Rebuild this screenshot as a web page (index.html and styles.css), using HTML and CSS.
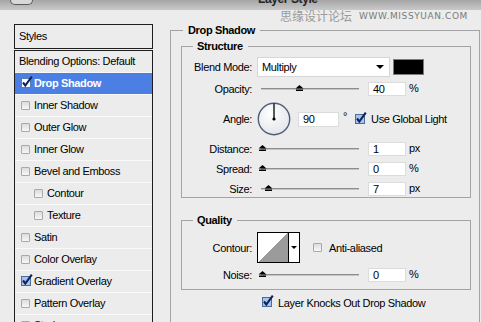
FILE: index.html
```html
<!DOCTYPE html>
<html>
<head>
	<title>Layer Style</title>
	<link rel="stylesheet" href="styles.css">
</head>
<body>
	<div class="titlebar">
		<span class="corner"></span>
		<span class="title">Layer Style</span>
	</div>
	<div class="watermark">
		<span class="cn">思缘设计论坛</span>
		<span class="url">www.MISSYUAN.COM</span>
	</div>

	<div class="main">
		<div class="styles">
			<div class="styles-head">Styles</div>
			<ul class="style-list">
				<li class="plain">Blending Options: Default</li>
				<li class="selected"><svg class="check" width="12" height="12" viewBox="0 0 12 12"><rect x="0.5" y="2.5" width="9" height="9" fill="#fff" stroke="#5a7bb0"/><path d="M2 6.5 L4.3 9.5 L10.8 0.6" fill="none" stroke="#0d2460" stroke-width="2.1"/></svg>Drop Shadow</li>
				<li><span class="cb"></span>Inner Shadow</li>
				<li><span class="cb"></span>Outer Glow</li>
				<li><span class="cb"></span>Inner Glow</li>
				<li><span class="cb"></span>Bevel and Emboss</li>
				<li class="sub"><span class="cb"></span>Contour</li>
				<li class="sub"><span class="cb"></span>Texture</li>
				<li><span class="cb"></span>Satin</li>
				<li><span class="cb"></span>Color Overlay</li>
				<li><svg class="check" width="12" height="12" viewBox="0 0 12 12"><rect x="0.5" y="2.5" width="9" height="9" fill="#a9c4ea" stroke="#4d6c9c"/><path d="M2 6.5 L4.3 9.5 L10.8 0.6" fill="none" stroke="#0d2460" stroke-width="2.1"/></svg>Gradient Overlay</li>
				<li><span class="cb"></span>Pattern Overlay</li>
				<li><span class="cb"></span>Stroke</li>
			</ul>
		</div>

		<fieldset class="group effect">
			<legend>Drop Shadow</legend>

			<fieldset class="group structure">
				<legend>Structure</legend>

				<div class="row blend">
					<span class="label">Blend Mode:</span>
					<div class="select"><span>Multiply</span><span class="arrow"></span></div>
					<span class="swatch"></span>
				</div>

				<div class="row slider-row">
					<span class="label">Opacity:</span>
					<div class="slider"><svg class="thumb" style="left: 38px" width="9" height="6" viewBox="0 0 9 6"><path d="M4.5 0 L8.5 3.5 L0.5 3.5 Z M1 4.5 H8 V6 H1 Z" fill="#000"/></svg></div>
					<span class="num">40</span>
					<span class="unit">%</span>
				</div>

				<div class="row angle">
					<span class="label">Angle:</span>
					<svg class="dial" width="34" height="34" viewBox="0 0 34 34">
						<defs>
							<radialGradient id="dialfill" cx="40%" cy="35%" r="70%">
								<stop offset="0" stop-color="#ffffff"/>
								<stop offset="1" stop-color="#e2e4ea"/>
							</radialGradient>
						</defs>
						<circle cx="17" cy="17" r="15.7" fill="url(#dialfill)" stroke="#4f5d78" stroke-width="1.4"/>
						<line x1="17" y1="17" x2="17" y2="1.5" stroke="#000" stroke-width="1.3"/>
						<circle cx="17" cy="17" r="1.6" fill="#000"/>
					</svg>
					<span class="num wide">90</span>
					<span class="degree">°</span>
					<svg class="check" width="12" height="12" viewBox="0 0 12 12"><rect x="0.5" y="2.5" width="9" height="9" fill="#a9c4ea" stroke="#4d6c9c"/><path d="M2 6.5 L4.3 9.5 L10.8 0.6" fill="none" stroke="#0d2460" stroke-width="2.1"/></svg>
					<span class="check-label">Use Global Light</span>
				</div>

				<div class="row slider-row">
					<span class="label">Distance:</span>
					<div class="slider"><svg class="thumb" style="left: 1px" width="9" height="6" viewBox="0 0 9 6"><path d="M4.5 0 L8.5 3.5 L0.5 3.5 Z M1 4.5 H8 V6 H1 Z" fill="#000"/></svg></div>
					<span class="num">1</span>
					<span class="unit">px</span>
				</div>

				<div class="row slider-row">
					<span class="label">Spread:</span>
					<div class="slider"><svg class="thumb" style="left: 1px" width="9" height="6" viewBox="0 0 9 6"><path d="M4.5 0 L8.5 3.5 L0.5 3.5 Z M1 4.5 H8 V6 H1 Z" fill="#000"/></svg></div>
					<span class="num">0</span>
					<span class="unit">%</span>
				</div>

				<div class="row slider-row">
					<span class="label">Size:</span>
					<div class="slider"><svg class="thumb" style="left: 7px" width="9" height="6" viewBox="0 0 9 6"><path d="M4.5 0 L8.5 3.5 L0.5 3.5 Z M1 4.5 H8 V6 H1 Z" fill="#000"/></svg></div>
					<span class="num">7</span>
					<span class="unit">px</span>
				</div>
			</fieldset>

			<fieldset class="group quality">
				<legend>Quality</legend>

				<div class="row contour-row">
					<span class="label">Contour:</span>
					<div class="contour">
						<span class="contour-preview"></span>
						<span class="contour-menu"><span class="arrow small"></span></span>
					</div>
					<span class="cb"></span>
					<span class="check-label">Anti-aliased</span>
				</div>

				<div class="row slider-row">
					<span class="label">Noise:</span>
					<div class="slider"><svg class="thumb" style="left: 1px" width="9" height="6" viewBox="0 0 9 6"><path d="M4.5 0 L8.5 3.5 L0.5 3.5 Z M1 4.5 H8 V6 H1 Z" fill="#000"/></svg></div>
					<span class="num">0</span>
					<span class="unit">%</span>
				</div>
			</fieldset>

			<div class="row knock">
				<svg class="check" width="12" height="12" viewBox="0 0 12 12"><rect x="0.5" y="2.5" width="9" height="9" fill="#a9c4ea" stroke="#4d6c9c"/><path d="M2 6.5 L4.3 9.5 L10.8 0.6" fill="none" stroke="#0d2460" stroke-width="2.1"/></svg>
				<span class="check-label">Layer Knocks Out Drop Shadow</span>
			</div>
		</fieldset>
	</div>
</body>
</html>
```

FILE: styles.css
```css
* {
	box-sizing: border-box;
}
body {
	margin: 0;
	height: 322px;
	overflow: hidden;
	background: #ececec;
	font-family: "Liberation Sans", Arial, sans-serif;
	font-size: 11px;
	letter-spacing: -0.35px;
	color: #000;
}

/* window chrome */
.titlebar {
	display: flex;
	align-items: flex-start;
	height: 10px;
	overflow: hidden;
	background: linear-gradient(#a6a6a6, #c9c9c9);
}
.corner {
	width: 23px;
	height: 5px;
	margin-left: 10px;
	border: 1px solid #5a5a5a;
	border-top: none;
	border-radius: 0 0 9px 9px;
	background: #d8d8d8;
}
.title {
	margin-top: -8px;
	margin-left: 225px;
	font-size: 12px;
	font-weight: bold;
	line-height: 14px;
	letter-spacing: -0.4px;
	color: #262626;
}
.watermark {
	position: absolute;
	top: 9px;
	right: 13px;
	display: flex;
	align-items: center;
	gap: 7px;
	letter-spacing: 0;
}
.watermark .cn {
	font-family: "Noto Sans CJK SC", sans-serif;
	font-size: 12px;
	line-height: 14px;
	color: #9a9a9a;
}
.watermark .url {
	font-family: "DejaVu Sans", sans-serif;
	font-size: 9px;
	text-transform: uppercase;
	letter-spacing: 0.6px;
	color: #7a7a7a;
}

.main {
	display: flex;
	align-items: flex-start;
	padding-top: 14px;
}

/* styles list */
.styles {
	flex: none;
	width: 139px;
	margin-left: 14px;
}
.styles-head {
	height: 25px;
	padding-left: 4px;
	border: 1px solid #1e1e1e;
	line-height: 23px;
}
.style-list {
	margin: 1px 0 0;
	padding: 0;
	list-style: none;
	border: 1px solid #1e1e1e;
	border-bottom: none;
}
.style-list li {
	display: flex;
	align-items: center;
	height: 22px;
	padding-left: 6px;
	padding-bottom: 1px;
	border-bottom: 1px solid #f9f9f9;
}
.style-list li.plain {
	padding-left: 4px;
}
.style-list li.sub {
	padding-left: 19px;
}
.style-list li.selected {
	background: #4c7fe4;
	color: #fff;
	font-weight: bold;
}
.cb {
	flex: none;
	width: 9px;
	height: 9px;
	margin-right: 4px;
	border: 1px solid #a9a9a9;
	border-radius: 1px;
	background: linear-gradient(#dcdcdc, #f7f7f7);
}
.check {
	flex: none;
	margin-right: 1px;
	margin-top: -3px;
}

/* effect panel */
.group {
	margin: 0;
	min-width: 0;
	padding: 0;
	border: 1px solid #a3a3a3;
}
.group legend {
	padding: 0 5px 0 4px;
	font-weight: bold;
	line-height: 13px;
}
.effect {
	flex: 1;
	margin: 0 1px 0 17px;
	padding: 3px 8px 0 10px;
	height: 320px;
}
.effect > legend {
	margin-left: 2px;
	padding: 0 5px;
}
.structure {
	padding: 4px 0 1px;
}
.structure legend,
.quality legend {
	margin-left: 11px;
}
.quality {
	margin-top: 16px;
	padding: 5px 0 7px;
}

.row {
	display: flex;
	align-items: center;
}
.label {
	flex: none;
	width: 70px;
	margin-right: 5px;
	text-align: right;
}
.blend {
	height: 20px;
}
.select {
	display: flex;
	align-items: center;
	justify-content: space-between;
	width: 133px;
	height: 20px;
	padding: 0 5px 0 4px;
	background: #fff;
	border: 1px solid #d6d6d6;
}
.arrow {
	width: 0;
	height: 0;
	border-left: 4px solid transparent;
	border-right: 4px solid transparent;
	border-top: 4px solid #000;
}
.arrow.small {
	border-left-width: 3px;
	border-right-width: 3px;
	border-top-width: 3px;
}
.swatch {
	width: 31px;
	height: 16px;
	margin-left: 3px;
	background: #000;
	border: 1px solid #7c7c7c;
}

.slider-row {
	height: 14px;
	margin-top: 5px;
}
.angle + .slider-row,
.slider-row + .slider-row {
	margin-top: 6px;
}
.slider {
	position: relative;
	flex: none;
	width: 102px;
	height: 14px;
}
.slider::before {
	content: "";
	position: absolute;
	left: 4px;
	right: 0;
	top: 6px;
	height: 1px;
	background: #8e8e8e;
	box-shadow: 0 1px 0 #c4c4c4;
}
.thumb {
	position: absolute;
	top: 3px;
}
.num {
	flex: none;
	width: 38px;
	height: 14px;
	margin-left: 9px;
	padding-left: 4px;
	background: #fff;
	border: 1px solid #dcdcdc;
	line-height: 12px;
}
.num.wide {
	width: 41px;
	height: 15px;
	margin-left: 7px;
	line-height: 13px;
}
.unit {
	margin-left: 3px;
	margin-top: -3px;
}
.angle {
	height: 34px;
	margin-top: 6px;
}
.degree {
	margin-left: 4px;
	margin-right: 8px;
	margin-top: -6px;
}
.check-label {
	margin-left: 3px;
}

.contour-row {
	height: 31px;
}
.contour {
	display: flex;
	width: 43px;
	height: 31px;
	margin-right: 13px;
	background: #fff;
	border: 1px solid #000;
}
.contour-preview {
	width: 31px;
	border-right: 1px solid #000;
	background: linear-gradient(to top left, #9b9b9b 50%, #fff 50%);
}
.contour-menu {
	flex: 1;
	display: flex;
	align-items: center;
	justify-content: center;
}
.quality .slider-row {
	margin-top: 5px;
}
.knock {
	height: 13px;
	margin-top: 6px;
	padding-left: 81px;
}
```
